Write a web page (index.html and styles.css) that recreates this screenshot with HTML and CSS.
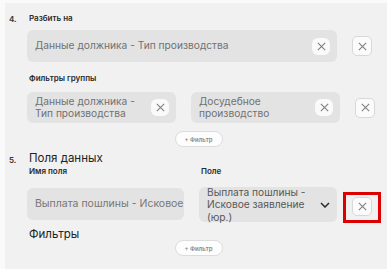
FILE: index.html
```html
<!DOCTYPE html>
<html lang="ru">
<head>
    <meta charset="UTF-8">
    <meta name="viewport" content="width=device-width, initial-scale=1.0">
    <title>Отчёт</title>
    <link rel="stylesheet" href="styles.css">
</head>
<body>

<div class="panel">
    <div class="step">
        <div class="step-num">4.</div>
        <div class="step-body">
            <div class="label">Разбить на</div>
            <div class="row row-first">
                <div class="field field-wide">
                    <span class="field-text">Данные должника - Тип производства</span>
                    <span class="clear"><svg viewBox="0 0 12 12"><path d="M2 2L10 10M10 2L2 10"/></svg></span>
                </div>
                <button class="remove"><svg viewBox="0 0 12 12"><path d="M2 2L10 10M10 2L2 10"/></svg></button>
            </div>

            <div class="label label-group">Фильтры группы</div>
            <div class="row">
                <div class="pair">
                    <div class="field field-a">
                        <span class="field-text">Данные должника -<br>Тип производства</span>
                        <span class="clear"><svg viewBox="0 0 12 12"><path d="M2 2L10 10M10 2L2 10"/></svg></span>
                    </div>
                    <div class="field field-b">
                        <span class="field-text">Досудебное<br>производство</span>
                        <span class="clear"><svg viewBox="0 0 12 12"><path d="M2 2L10 10M10 2L2 10"/></svg></span>
                    </div>
                </div>
                <button class="remove"><svg viewBox="0 0 12 12"><path d="M2 2L10 10M10 2L2 10"/></svg></button>
            </div>
            <div class="add-row"><button class="add">+ Фильтр</button></div>
        </div>
    </div>

    <div class="step step-five">
        <div class="step-num">5.</div>
        <div class="step-body">
            <div class="title">Поля данных</div>
            <div class="row row-fields">
                <div class="col col-name">
                    <div class="label">Имя поля</div>
                    <div class="field field-name">
                        <span class="field-text nowrap">Выплата пошлины - Исковое заявление (юр.)</span>
                    </div>
                </div>
                <div class="col col-value">
                    <div class="label">Поле</div>
                    <div class="field field-select">
                        <span class="field-text dark">Выплата пошлины -<br>Исковое заявление<br>(юр.)</span>
                        <svg class="chevron" viewBox="0 0 10 6"><path d="M1 1L5 5L9 1"/></svg>
                    </div>
                </div>
                <div class="remove-wrap">
                    <button class="remove remove-marked"><svg viewBox="0 0 12 12"><path d="M2 2L10 10M10 2L2 10"/></svg></button>
                </div>
            </div>
            <div class="title title-filters">Фильтры</div>
            <div class="add-row add-row-last"><button class="add">+ Фильтр</button></div>
        </div>
    </div>
</div>

</body>
</html>
```

FILE: styles.css
```css
body {
    margin: 0;
    background-color: #fafafa;
    font-family: Inter, "Noto Sans", sans-serif;
    color: #222;
}
.panel {
    margin: 3px 0 0 5px;
    height: 266px;
    background-color: #f1f1f1;
    padding: 10px 15px 0 4px;
    box-sizing: border-box;
    overflow: hidden;
}
.step {
    display: flex;
}
.step-num {
    width: 18px;
    flex-shrink: 0;
    font-size: 8px;
    font-weight: 600;
    color: #333;
    padding-top: 1px;
}
.step-body {
    flex: 1;
    min-width: 0;
}
.label {
    font-size: 8px;
    font-weight: 600;
    color: #2a2a2a;
    padding-left: 2px;
    height: 14px;
}
.label-group {
    margin-top: 11px;
    margin-bottom: 5px;
}
.row {
    display: flex;
    align-items: center;
}
.row-first {
    margin-top: 3px;
}
.field {
    background-color: #e3e3e3;
    border-radius: 6px;
    display: flex;
    align-items: center;
    padding: 0 7px 0 8px;
    box-sizing: border-box;
    font-size: 10.2px;
    color: #717171;
    flex-shrink: 0;
}
.field-text {
    flex: 1;
    line-height: 11.5px;
    overflow: hidden;
}
.nowrap {
    white-space: nowrap;
}
.dark {
    color: #575757;
}
.field-wide {
    width: 310px;
    height: 32px;
}
.pair {
    display: flex;
    gap: 15px;
}
.field-a,
.field-b {
    width: 149px;
    height: 31px;
}
.clear {
    width: 18px;
    height: 17px;
    border-radius: 6px;
    background-color: #fafafa;
    display: flex;
    align-items: center;
    justify-content: center;
    flex-shrink: 0;
}
.clear svg,
.remove svg {
    width: 11px;
    height: 11px;
    fill: none;
    stroke: #808080;
    stroke-width: 1.2;
}
.remove {
    width: 20px;
    height: 20px;
    margin-left: 15px;
    padding: 0;
    border: 1px solid #d8d8d8;
    border-radius: 5px;
    background-color: #fbfbfb;
    display: flex;
    align-items: center;
    justify-content: center;
    flex-shrink: 0;
}
.add-row {
    display: flex;
    justify-content: center;
    margin-top: 8px;
    padding-right: 2px;
}
.add {
    height: 16px;
    width: 48px;
    padding: 0;
    border: 1px solid #dcdcdc;
    border-radius: 8px;
    background-color: #fdfdfd;
    font-family: Inter, sans-serif;
    font-size: 6px;
    font-weight: 600;
    color: #8a8a8a;
}
.step-five {
    margin-top: 5px;
}
.step-five .step-num {
    padding-top: 3px;
}
.title {
    font-size: 11.5px;
    color: #222;
    padding-left: 2px;
    line-height: 13px;
}
.row-fields {
    align-items: flex-start;
    margin-top: 1px;
}
.col-name {
    width: 157px;
    flex-shrink: 0;
}
.col-value {
    width: 138px;
    margin-left: 15px;
    flex-shrink: 0;
}
.field-name {
    margin-top: 8px;
    width: 157px;
    height: 32px;
    padding-right: 0;
    font-size: 10.5px;
    color: #777;
}
.field-select {
    margin-top: 7px;
    width: 138px;
    height: 35px;
    padding-right: 7px;
}
.field-select .field-text {
    line-height: 12.5px;
}
.chevron {
    width: 10px;
    height: 6px;
    fill: none;
    stroke: #2a2a2a;
    stroke-width: 1.5;
    flex-shrink: 0;
}
.remove-wrap {
    margin-top: 26px;
    margin-left: 6px;
    padding: 2px 6px 4px;
    border: 3px solid #dc0000;
    flex-shrink: 0;
}
.remove-marked {
    margin-left: 0;
    width: 20px;
    height: 19px;
}
.title-filters {
    margin-top: 5px;
}
.add-row-last {
    margin-top: -1px;
}
```
